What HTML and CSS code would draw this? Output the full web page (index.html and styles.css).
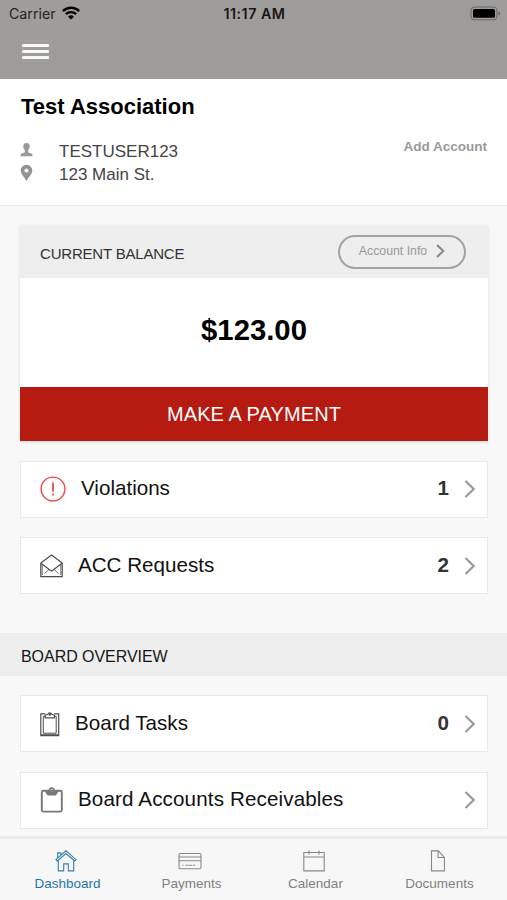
FILE: index.html
```html
<!DOCTYPE html>
<html lang="en">
<head>
<meta charset="utf-8">
<title>Dashboard</title>
<link rel="stylesheet" href="styles.css">
</head>
<body>
<div class="app">
  <header class="topbar">
    <div class="status">
      <div class="carrier"><span>Carrier</span>
        <svg width="18" height="14" viewBox="0 0 18 14" fill="none" stroke="#000" stroke-width="2.4"><path d="M.8 5.1a11.8 11.8 0 0 1 16.4 0"/><path d="M3.8 8.2a7.5 7.5 0 0 1 10.4 0"/><path d="M9 13.6 6 10.7a4.3 4.3 0 0 1 6 0Z" fill="#000" stroke="none"/></svg>
      </div>
      <div class="clock">11:17 AM</div>
      <svg class="battery" width="31" height="15" viewBox="0 0 31 15"><rect x="1" y="1" width="26" height="12.8" rx="3.6" fill="none" stroke="#686866" stroke-width="1.1"/><rect x="3" y="3" width="22" height="8.8" rx="1.6"/><path d="M28.5 5.2q1.7.4 1.7 2.2t-1.7 2.2z" fill="#686866"/></svg>
    </div>
    <div class="menu"><i></i><i></i><i></i></div>
  </header>

  <section class="profile">
    <h1>Test Association</h1>
    <div class="profile-body">
      <div class="details">
        <div class="detail">
          <svg width="13" height="15" viewBox="0 0 13 15" fill="#999"><path d="M6.500 1C4.500 1 3.300 2.200 3.300 4.200c0 1.700.6 3 1.500 3.800v2.200C3.800 10.900.5 11.200.5 13v1.200h12V13c0-1.800-3.300-2.100-4.300-2.800V8c.9-.8 1.500-2.100 1.500-3.800C9.700 2.200 8.500 1 6.500 1Z"/></svg>
          <span>TESTUSER123</span>
        </div>
        <div class="detail">
          <svg width="13" height="18" viewBox="0 0 13 18" fill="#929292"><path fill-rule="evenodd" d="M6.500.7A5.800 5.800 0 0 0 .7 6.500C.7 10 4.200 12.500 6.500 17.300 8.800 12.500 12.300 10 12.300 6.500A5.800 5.800 0 0 0 6.500.7Zm0 3.700a2.100 2.100 0 1 1 0 4.200 2.100 2.100 0 0 1 0-4.200Z"/></svg>
          <span>123 Main St.</span>
        </div>
      </div>
      <a class="add">Add Account</a>
    </div>
  </section>

  <main>
    <section class="balance">
      <div class="balance-head">
        <span class="label">CURRENT BALANCE</span>
        <a class="pill"><span>Account Info</span><svg width="9" height="14" viewBox="0 0 9 14" fill="none" stroke="#888" stroke-width="2"><path d="m1 1 6.300 6L1 13"/></svg></a>
      </div>
      <div class="amount">$123.00</div>
      <div class="pay">MAKE A PAYMENT</div>
    </section>

    <div class="rows">
      <div class="row">
        <svg class="icon" width="26" height="26" viewBox="0 0 26 26" fill="none" stroke="#ed4848" stroke-width="1.400"><circle cx="13" cy="13" r="11.900"/><path d="M13 6.500v9" stroke-width="1.800"/><path d="M13 17.500v2" stroke-width="1.800"/></svg>
        <span class="name">Violations</span><b>1</b>
        <svg class="chev" width="12" height="18" viewBox="0 0 12 18"><path d="m1.500 1 8.200 8-8.200 8"/></svg>
      </div>
      <div class="row">
        <svg class="icon" width="23" height="24" viewBox="0 0 23 24" fill="none" stroke="#4b4b4b" stroke-width="1.100"><path d="M.8 9v13.600h21.400V9M.8 9 11.500 1l10.700 8M.8 9l8.700 6.800 2 1.200 2-1.200L22.200 9" stroke-width="1.200"/><path d="m4.500 19.500 4.500-4.100M18.500 19.500 14 15.400M2.200 21V11M20.800 21V11" stroke-width=".8"/></svg>
        <span class="name">ACC Requests</span><b>2</b>
        <svg class="chev" width="12" height="18" viewBox="0 0 12 18"><path d="m1.500 1 8.200 8-8.200 8"/></svg>
      </div>
    </div>

    <h2>BOARD OVERVIEW</h2>

    <div class="rows">
      <div class="row">
        <svg class="icon" width="20" height="26" viewBox="0 0 20 26" fill="none" stroke="#505050" stroke-width="1.200"><path d="M5.500 2.800H.8v21.800h17.900V2.800H14"/><path d="M5.500 5.300H3.300v16.900h12.900V5.300H14M1 23.700h17.500" stroke-width="1"/><path d="M5.200 6.900V4.300l2.600-1.100a2.200 2.200 0 0 1 4 0l2.600 1.100v2.600Z"/><circle cx="9.800" cy="3.500" r=".7"/></svg>
        <span class="name">Board Tasks</span><b>0</b>
        <svg class="chev" width="12" height="18" viewBox="0 0 12 18"><path d="m1.500 1 8.200 8-8.200 8"/></svg>
      </div>
      <div class="row">
        <svg class="icon" width="23" height="26" viewBox="0 0 23 26" fill="none" stroke="#777" stroke-width="1.900"><rect x="1.800" y="3.800" width="20" height="20.800" rx="1.500"/><path fill="#777" stroke="none" fill-rule="evenodd" d="M5.500 3.300h3.200A3 3 0 0 1 14.700 3.300h3.200v2.200L15.800 8.500H7.700L5.500 5.500ZM11.700 2a1.400 1.400 0 1 0 0 2.800 1.400 1.400 0 0 0 0-2.800Z"/></svg>
        <span class="name long">Board Accounts Receivables</span>
        <svg class="chev" width="12" height="18" viewBox="0 0 12 18"><path d="m1.500 1 8.200 8-8.200 8"/></svg>
      </div>
    </div>
  </main>

  <nav>
    <a class="tab active"><svg width="22" height="22" viewBox="0 0 22 22" fill="none" stroke="#327fac" stroke-width="1.100"><path d="M3.300 10.500v10.400h5.400v-7h4.600v7h5.400V10.500"/><path d="m1 9.700 10-8.900 10 8.900-1.400 1.300L11 3.600 2.400 11ZM2.700 8.200V2.900h3.200v2.400"/></svg><span>Dashboard</span></a>
    <a class="tab"><svg width="24" height="22" viewBox="0 0 24 22" fill="none" stroke="#888" stroke-width="1.100"><rect x="1" y="3.500" width="22" height="15.300" rx="1.200"/><path d="M1 7h22M1 10.800h22"/><path d="M4.300 15.200h1.200M7.500 15.200h9.500" stroke-dasharray="3 .6"/></svg><span>Payments</span></a>
    <a class="tab"><svg width="22" height="22" viewBox="0 0 22 22" fill="none" stroke="#888" stroke-width="1.100"><path d="M.8 2.500h20.400v18.400H.8ZM.8 7h20.400M6 .5v4M16 .5v4"/></svg><span>Calendar</span></a>
    <a class="tab"><svg width="22" height="22" viewBox="0 0 22 22" fill="none" stroke="#888" stroke-width="1.100"><path d="M4.500.9h6.900l6 6.600v13.400H4.500ZM11.100.9v6.600h6.300"/></svg><span>Documents</span></a>
  </nav>
</div>
</body>
</html>
```
FILE: styles.css
```css
* { box-sizing: border-box; }
body { margin: 0; font-family: "Liberation Sans", Arial, sans-serif; background: #f8f8f8; }
.app { width: 507px; height: 900px; display: flex; flex-direction: column; overflow: hidden; }
svg { display: block; flex: none; }

.topbar { height: 79px; flex: none; background: #9e9d9b; }
.status { height: 27px; padding: 0 6px 0 9px; display: grid; grid-template-columns: 1fr auto 1fr; align-items: center; font-family: Inter, sans-serif; }
.carrier { display: flex; align-items: center; gap: 6px; font-size: 14.200px; color: #242424; }
.carrier svg { margin-top: -1px; }
.clock { font-size: 14.300px; font-weight: 600; letter-spacing: .5px; color: #161616; margin-right: 1px; }
.battery { justify-self: end; }
.menu { width: 27px; margin: 17px 0 0 22px; display: grid; gap: 3.500px; }
.menu i { height: 2.600px; background: #f8f8f6; border-radius: 1px; }

.profile { height: 127px; flex: none; background: #fff; border-bottom: 1px solid #ebebeb; padding: 15px 20px 0 21px; }
h1 { margin: 0; font-size: 22px; line-height: 26px; font-weight: 700; }
.profile-body { display: flex; justify-content: space-between; margin-top: 20px; }
.detail { display: flex; align-items: center; gap: 26px; height: 23px; font-size: 17px; color: #444; }
.detail svg { margin: -4px 0 0 -1px; }
.add { font-size: 13.500px; line-height: 16px; font-weight: 700; color: #999; margin-top: -1px; }

main { flex: 1; min-height: 0; }
.balance { margin: 19px 19px 0 20px; height: 216px; background: #fff; box-shadow: 0 1px 3px rgba(0,0,0,.14); border-radius: 2px 2px 0 0; }
.balance-head { height: 53px; background: #eee; display: flex; align-items: center; justify-content: space-between; padding: 0 22px 0 20px; border-radius: 2px 2px 0 0; }
.label { font-size: 15px; letter-spacing: -.2px; color: #333; padding-top: 4px; }
.pill { width: 128px; height: 34px; border: 2px solid #a3a3a3; border-radius: 17px; display: flex; align-items: center; justify-content: center; gap: 9px; padding-bottom: 2px; font-size: 12.300px; color: #999; }
.amount { height: 109px; display: flex; align-items: center; justify-content: center; padding-bottom: 5px; font-size: 29.300px; font-weight: 700; }
.pay { height: 54px; display: flex; align-items: center; justify-content: center; background: #b61b12; color: #fff; font-size: 20px; letter-spacing: .1px; padding-top: 1px; }

.rows { padding: 19.500px 19px 0 20px; display: grid; gap: 19.500px; }
.row { height: 57px; background: #fff; border: 1px solid #e9e9e9; display: flex; align-items: center; padding: 0 11px 0 19px; font-size: 20.600px; }
.name { margin-left: 15px; margin-right: auto; padding-bottom: 2px; color: #111; }
.long { letter-spacing: .13px; }
.row b { margin-right: 15px; padding-bottom: 2px; color: #333; }
.chev { fill: none; stroke: #999; stroke-width: 2.200; }
h2 { margin: 38.500px 0 0; height: 43px; background: #eee; padding: 3px 20px 0 21px; font-size: 16px; line-height: 42px; font-weight: 400; letter-spacing: -.05px; color: #161616; }

nav { height: 64px; flex: none; background: #f7f7f7; border-top: 3px solid #eaeaea; display: grid; grid-template-columns: repeat(4, 124px); justify-content: center; }
.tab { display: flex; flex-direction: column; align-items: center; padding-top: 11px; gap: 4px; font-size: 13.500px; line-height: 15px; color: #808080; }
.tab svg { margin-right: 4px; }
.active { color: #1f75a8; }
```
